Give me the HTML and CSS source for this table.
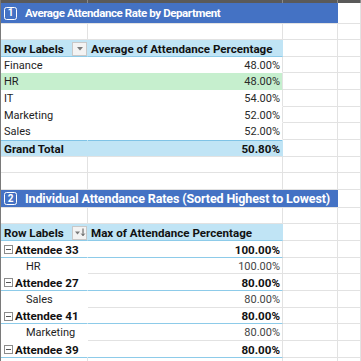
FILE: index.html
```html
<!DOCTYPE html>
<html>
<head>
<meta charset="utf-8">
<link rel="stylesheet" href="styles.css">
</head>
<body>
<div class="sheet">
  <div class="row topbar"><div class="c a"></div><div class="c b"></div><div class="c cc"></div><div class="c d"></div></div>

  <div class="row h21">
    <div class="title t1"><span class="num">1</span>Average Attendance Rate by Department</div>
    <div class="c d"></div>
  </div>
  <div class="row h16"><div class="c a"></div><div class="c b"></div><div class="c cc"></div><div class="c d"></div></div>

  <div class="row h17 head">
    <div class="c a p"><span class="bold">Row Labels</span><span class="btn"><svg width="8" height="6" viewBox="0 0 8 6"><path d="M1 1h6L4 4.5z" fill="#7a7a7a"/></svg></span></div>
    <div class="c b p"><span class="bold">Average of Attendance Percentage</span></div>
    <div class="c cc"></div><div class="c d"></div>
  </div>
  <div class="row h16 data"><div class="c a p">Finance</div><div class="c b p v">48.00%</div><div class="c cc"></div><div class="c d"></div></div>
  <div class="row h17 data green"><div class="c a p">HR</div><div class="c b p v">48.00%</div><div class="c cc"></div><div class="c d"></div></div>
  <div class="row h17 data"><div class="c a p">IT</div><div class="c b p v">54.00%</div><div class="c cc"></div><div class="c d"></div></div>
  <div class="row h16 data"><div class="c a p">Marketing</div><div class="c b p v">52.00%</div><div class="c cc"></div><div class="c d"></div></div>
  <div class="row h17 data"><div class="c a p">Sales</div><div class="c b p v">52.00%</div><div class="c cc"></div><div class="c d"></div></div>
  <div class="row h17 total"><div class="c a p"><span class="bold">Grand Total</span></div><div class="c b p v"><span class="bold">50.80%</span></div><div class="c cc"></div><div class="c d"></div></div>
  <div class="row h16"><div class="c a"></div><div class="c b"></div><div class="c cc"></div><div class="c d"></div></div>
  <div class="row h17"><div class="c a"></div><div class="c b"></div><div class="c cc"></div><div class="c d"></div></div>

  <div class="row h18">
    <div class="title t2"><span class="num">2</span>Individual Attendance Rates (Sorted Highest to Lowest)</div>
    <div class="c d"></div>
  </div>
  <div class="row h16"><div class="c a"></div><div class="c b"></div><div class="c cc"></div><div class="c d"></div></div>

  <div class="row h17 head">
    <div class="c a p"><span class="bold">Row Labels</span><span class="btn"><svg width="12" height="9" viewBox="0 0 12 9"><path d="M1 3.5h5L3.5 6.5z" fill="#7a7a7a"/><path d="M9 0.5v7M7.3 5.6L9 7.6l1.7-2" stroke="#555" stroke-width="1" fill="none"/></svg></span></div>
    <div class="c b p"><span class="bold">Max of Attendance Percentage</span></div>
    <div class="c cc"></div><div class="c d"></div>
  </div>
  <div class="row h17 att"><div class="c a p"><span class="tog"></span><span class="bold">Attendee 33</span></div><div class="c b p v"><span class="bold">100.00%</span></div><div class="c cc"></div><div class="c d"></div></div>
  <div class="row h16 det"><div class="c a p ind">HR</div><div class="c b p v">100.00%</div><div class="c cc"></div><div class="c d"></div></div>
  <div class="row h17 att"><div class="c a p"><span class="tog"></span><span class="bold">Attendee 27</span></div><div class="c b p v"><span class="bold">80.00%</span></div><div class="c cc"></div><div class="c d"></div></div>
  <div class="row h17 det"><div class="c a p ind">Sales</div><div class="c b p v">80.00%</div><div class="c cc"></div><div class="c d"></div></div>
  <div class="row h16 att"><div class="c a p"><span class="tog"></span><span class="bold">Attendee 41</span></div><div class="c b p v"><span class="bold">80.00%</span></div><div class="c cc"></div><div class="c d"></div></div>
  <div class="row h17 det"><div class="c a p ind">Marketing</div><div class="c b p v">80.00%</div><div class="c cc"></div><div class="c d"></div></div>
  <div class="row h17 att"><div class="c a p"><span class="tog"></span><span class="bold">Attendee 39</span></div><div class="c b p v"><span class="bold">80.00%</span></div><div class="c cc"></div><div class="c d"></div></div>
  <div class="row h16"><div class="c a"></div><div class="c b"></div><div class="c cc"></div><div class="c d"></div></div>
</div>
</body>
</html>
```
FILE: styles.css
```css
html, body {
  margin: 0;
  padding: 0;
  background: #fff;
  width: 361px;
  height: 361px;
  overflow: hidden;
}
.sheet {
  width: 361px;
  border-left: 1px solid #7a7a7a;
  box-sizing: border-box;
  font-family: Roboto, "Liberation Sans", sans-serif;
  font-size: 11px;
  color: #1e1e1e;
}
.row {
  display: grid;
  grid-template-columns: 87px 195px 55px 1fr;
}
.h16 { height: 16px; }
.h17 { height: 17px; }
.h18 { height: 18px; }
.h21 { height: 21px; }
.topbar { height: 3px; background: #5a5a5a; }
.topbar .c { border-bottom: 0; border-right-color: #8a8a8a; }
.c {
  box-sizing: border-box;
  border-right: 1px solid #e2e2e2;
  border-bottom: 1px solid #e2e2e2;
  display: flex;
  align-items: center;
  min-width: 0;
  white-space: nowrap;
}
.p { padding: 1px 2px 0 3px; }
.v { justify-content: flex-end; }
.bold { font-weight: 700; font-size: 11.6px; color: #111; }
.title {
  grid-column: 1 / 4;
  background: #4472c4;
  color: #fff;
  font-weight: 700;
  display: flex;
  align-items: center;
  padding-left: 3px;
  border-bottom: 1px solid #e2e2e2;
  box-sizing: border-box;
}
.t1 { font-size: 11.5px; letter-spacing: -0.4px; }
.t2 { font-size: 12.5px; letter-spacing: -0.12px; }
.num {
  width: 13px;
  height: 13px;
  box-sizing: border-box;
  border: 1.6px solid #fff;
  border-radius: 2.5px;
  font-size: 10px;
  letter-spacing: 0;
  display: flex;
  align-items: center;
  justify-content: center;
  margin-right: 8px;
  line-height: 1;
  flex: none;
}
.head .a, .head .b {
  background: #c0e4f5;
  border-right-color: #c0e4f5;
  border-bottom: 1px solid #8dcbe9;
}
.head .a { justify-content: space-between; padding-right: 0; }
.btn {
  width: 15px;
  height: 14px;
  box-sizing: border-box;
  background: #f3f3f3;
  border: 1px solid #c8c8c8;
  display: flex;
  align-items: center;
  justify-content: center;
}
.data .a, .data .b, .det .a, .att .a, .att .b {
  border-right-color: #fff;
  border-bottom-color: #fff;
}
.data .b { border-right-color: #e2e2e2; border-bottom-color: #fff; }
.data .b, .det .b { color: #2a2a2a; }
.green .a, .green .b { background: #c6efce; border-bottom-color: #c6efce; }
.green .a { border-right-color: #c6efce; }
.total .a, .total .b {
  background: #c0e4f5;
  border-right-color: #c0e4f5;
  border-bottom-color: #e2e2e2;
  box-shadow: inset 0 1px 0 #7fc3e6;
}
.att .a, .att .b { border-bottom: 1px solid #8dcbe9; }
.att .b { border-right-color: #e2e2e2; }
.det .a { border-right-color: #fff; border-bottom-color: #fff; }
.det .b { color: #444; }
.ind { padding-left: 25px; }
.tog {
  width: 9px;
  height: 9px;
  box-sizing: border-box;
  border: 1px solid #8c8c8c;
  position: relative;
  margin-right: 2px;
  flex: none;
}
.tog::after {
  content: "";
  position: absolute;
  left: 1px;
  right: 1px;
  top: 3px;
  height: 1px;
  background: #555;
}
```
